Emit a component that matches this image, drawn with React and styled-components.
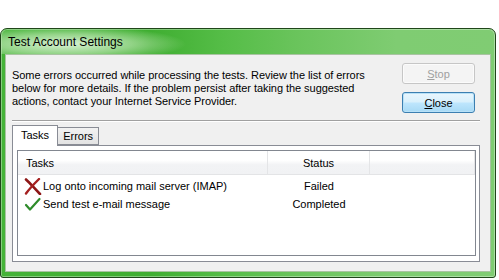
import React from 'react';
import styled, { createGlobalStyle } from 'styled-components';

const GlobalStyle = createGlobalStyle`
  html, body { margin: 0; padding: 0; background: #ffffff; }
  body { font-family: "Liberation Sans", Arial, sans-serif; font-size: 11px; color: #000; }
`;

const Page = styled.div`
  padding-top: 28px;
  width: 499px;
  height: 252px;
`;

const Window = styled.div`
  box-sizing: border-box;
  width: 496px;
  height: 250px;
  border: 1px solid #20461a;
  border-radius: 7px 7px 3px 3px;
  background: linear-gradient(90deg, #45b338 0%, #3fae31 30%, #55bd47 45%, #6ac45c 60%, #7fcc72 80%, #80cc73 100%);
  display: flex;
  flex-direction: column;
  padding: 0 4px 5px 4px;
  box-shadow: inset 0 0 0 1px rgba(255, 255, 255, 0.35);
`;

const TitleBar = styled.div`
  height: 27px;
  display: flex;
  align-items: center;
  font-size: 12px;
  color: #000;
  background: radial-gradient(ellipse 120px 18px at 65px 15px, rgba(225, 245, 220, 0.95) 0%, rgba(200, 235, 190, 0.6) 55%, rgba(255, 255, 255, 0) 100%);
  margin: 0 -4px;
  padding-left: 7px;
`;

const Client = styled.div`
  flex: 1;
  background: #f0f0f0;
  border: 1px solid #a9c3a2;
  padding: 8px 8px 9px 6px;
  display: flex;
  flex-direction: column;
`;

const TopRow = styled.div`
  display: flex;
  justify-content: space-between;
`;

const Message = styled.p`
  margin: 6px 0 0 0;
  line-height: 13px;
  font-size: 11px;
  white-space: nowrap;
  letter-spacing: -0.05px;
`;

const ButtonColumn = styled.div`
  display: flex;
  flex-direction: column;
  gap: 8px;
  margin-right: 7px;
`;

const Button = styled.button`
  box-sizing: border-box;
  width: 73px;
  height: 21px;
  font-family: inherit;
  font-size: 11px;
  border-radius: 3px;
  padding: 0;
  color: ${({ disabled }) => (disabled ? '#a0a0a0' : '#000')};
  border: 1px solid ${({ $primary, disabled }) => ($primary ? '#3c7fb1' : disabled ? '#c6c6c6' : '#707070')};
  background: ${({ $primary, disabled }) => {
    if (disabled) return '#f4f4f4';
    if ($primary) return 'linear-gradient(180deg, #e9f6fd 0%, #d9f0fc 48%, #bee6fd 52%, #a7d9f5 100%)';
    return 'linear-gradient(180deg, #f2f2f2 0%, #ebebeb 48%, #dddddd 52%, #cfcfcf 100%)';
  }};
  box-shadow: ${({ $primary }) => ($primary ? 'inset 0 0 0 1px #b8e1f7' : 'inset 0 0 0 1px #fbfbfb')};

  u { text-decoration: underline; }
`;

const Separator = styled.div`
  height: 0;
  border-top: 1px solid #a0a0a0;
  border-bottom: 1px solid #ffffff;
  margin: 7px 2px 3px 0;
`;

const TabStrip = styled.div`
  display: flex;
  align-items: flex-end;
  height: 20px;
  position: relative;
  z-index: 1;
`;

const Tab = styled.div`
  box-sizing: border-box;
  height: ${({ $active }) => ($active ? 21 : 18)}px;
  padding: 0 ${({ $active }) => ($active ? 8 : 5)}px;
  display: flex;
  align-items: ${({ $active }) => ($active ? 'flex-start' : 'center')};
  padding-top: ${({ $active }) => ($active ? 3 : 0)}px;
  border: 1px solid #898c95;
  border-bottom: ${({ $active }) => ($active ? 'none' : '1px solid #898c95')};
  margin-left: ${({ $active }) => ($active ? 0 : -1)}px;
  background: ${({ $active }) => ($active ? '#ffffff' : 'linear-gradient(180deg, #f2f2f2 0%, #e3e3e3 100%)')};
  margin-bottom: ${({ $active }) => ($active ? -1 : 0)}px;
`;

const TabPanel = styled.div`
  box-sizing: border-box;
  height: 117px;
  margin-right: 2px;
  background: #ffffff;
  border: 1px solid #898c95;
  padding: 4px 3px 5px 4px;
  display: flex;
`;

const ListView = styled.div`
  flex: 1;
  border: 1px solid #828790;
  display: flex;
  flex-direction: column;
`;

const HeaderRow = styled.div`
  display: grid;
  grid-template-columns: 250px 102px 1fr;
  height: 23px;
  background: linear-gradient(180deg, #ffffff 0%, #ffffff 40%, #f2f3f5 60%, #f1f2f4 100%);
  border-bottom: 1px solid #e3e4e6;
`;

const HeaderCell = styled.div`
  display: flex;
  align-items: center;
  justify-content: ${({ $center }) => ($center ? 'center' : 'flex-start')};
  padding-left: ${({ $center }) => ($center ? 0 : 8)}px;
  border-right: 1px solid #e4e5e7;
`;

const Row = styled.div`
  display: grid;
  grid-template-columns: 250px 102px 1fr;
  height: 18px;
  align-items: center;
`;

const TaskCell = styled.div`
  display: flex;
  align-items: center;
  padding-left: 6px;
  gap: 1px;
`;

const StatusCell = styled.div`
  text-align: center;
`;

const Rows = styled.div`
  padding-top: 2px;
`;

const FailIcon = () => (
  <svg width="18" height="17" viewBox="0 0 18 17">
    <path d="M2 1.5 C6 5, 10 10, 16 16" stroke="#8d1616" strokeWidth="2.6" fill="none" strokeLinecap="round" />
    <path d="M15 1 C11 5, 6 10, 2 15.5" stroke="#a52020" strokeWidth="2.4" fill="none" strokeLinecap="round" />
  </svg>
);

const OkIcon = () => (
  <svg width="18" height="17" viewBox="0 0 18 17">
    <path d="M2 9 L6 13.5 L15.5 3" stroke="#2e8b2a" strokeWidth="2.2" fill="none" strokeLinecap="round" strokeLinejoin="round" />
  </svg>
);

const tasks = [
  { name: 'Log onto incoming mail server (IMAP)', status: 'Failed', ok: false },
  { name: 'Send test e-mail message', status: 'Completed', ok: true },
];

export default function App() {
  return (
    <Page>
      <GlobalStyle />
      <Window>
        <TitleBar>Test Account Settings</TitleBar>
        <Client>
          <TopRow>
            <Message>
              Some errors occurred while processing the tests. Review the list of errors
              <br />
              below for more details. If the problem persist after taking the suggested
              <br />
              actions, contact your Internet Service Provider.
            </Message>
            <ButtonColumn>
              <Button disabled>
                <u>S</u>top
              </Button>
              <Button $primary>
                <u>C</u>lose
              </Button>
            </ButtonColumn>
          </TopRow>
          <Separator />
          <TabStrip>
            <Tab $active>Tasks</Tab>
            <Tab>Errors</Tab>
          </TabStrip>
          <TabPanel>
            <ListView>
              <HeaderRow>
                <HeaderCell>Tasks</HeaderCell>
                <HeaderCell $center>Status</HeaderCell>
                <HeaderCell />
              </HeaderRow>
              <Rows>
                {tasks.map((t) => (
                  <Row key={t.name}>
                    <TaskCell>
                      {t.ok ? <OkIcon /> : <FailIcon />}
                      {t.name}
                    </TaskCell>
                    <StatusCell>{t.status}</StatusCell>
                  </Row>
                ))}
              </Rows>
            </ListView>
          </TabPanel>
        </Client>
      </Window>
    </Page>
  );
}
